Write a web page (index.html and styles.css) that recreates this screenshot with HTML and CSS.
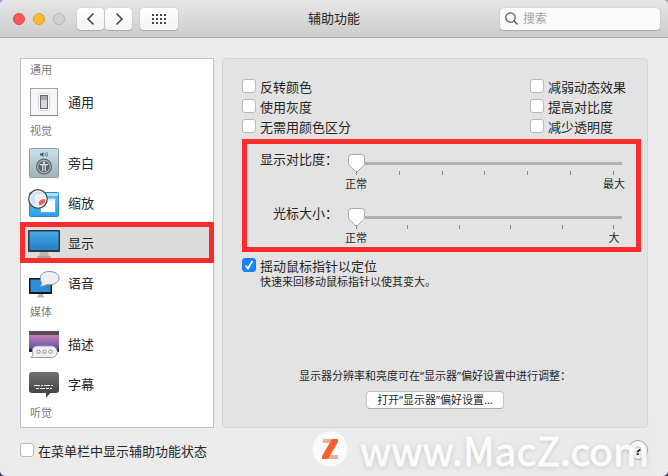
FILE: index.html
```html
<!DOCTYPE html>
<html lang="zh-CN">
<head>
    <meta charset="UTF-8">
    <meta name="viewport" content="width=device-width, initial-scale=1.0">
    <title>辅助功能</title>
    <link rel="stylesheet" href="styles.css">
</head>
<body>
<div class="window">

    <!-- 标题栏 -->
    <header class="titlebar">
        <div class="titlebar-left">
            <div class="lights">
                <button class="light red" aria-label="关闭"></button>
                <button class="light yellow" aria-label="最小化"></button>
                <button class="light off" aria-label="缩放" disabled></button>
            </div>
            <div class="nav">
                <button class="tool-btn" aria-label="后退">
                    <svg width="10" height="14" viewBox="0 0 10 14"><path d="M7.500 1.500 2 7l5.500 5.500" fill="none" stroke="#444" stroke-width="1.600"/></svg>
                </button>
                <button class="tool-btn" aria-label="前进">
                    <svg width="10" height="14" viewBox="0 0 10 14"><path d="M2.500 1.500 8 7l-5.500 5.500" fill="none" stroke="#444" stroke-width="1.600"/></svg>
                </button>
            </div>
            <button class="tool-btn wide" aria-label="显示全部">
                <svg width="14" height="10" viewBox="0 0 14 10" fill="#444">
                    <path d="M0 0h2v2H0zM4 0h2v2H4zM8 0h2v2H8zM12 0h2v2h-2zM0 4h2v2H0zM4 4h2v2H4zM8 4h2v2H8zM12 4h2v2h-2zM0 8h2v2H0zM4 8h2v2H4zM8 8h2v2H8zM12 8h2v2h-2z"/>
                </svg>
            </button>
        </div>
        <h1 class="title">辅助功能</h1>
        <label class="search">
            <svg width="13" height="13" viewBox="0 0 13 13"><circle cx="5.500" cy="5.500" r="4.700" fill="none" stroke="#555" stroke-width="1.200"/><path d="M9 9l3.500 3.500" stroke="#555" stroke-width="1.400"/></svg>
            <input type="text" placeholder="搜索" aria-label="搜索">
        </label>
    </header>

    <main class="content">
        <!-- 左侧列表 -->
        <nav class="sidebar">
            <h2 class="group">通用</h2>
            <a class="item" href="#general">
                <svg width="32" height="32" viewBox="0 0 32 32">
                    <rect x="2.500" y="3.500" width="27" height="27" fill="#f5f6f8" stroke="#a3a5a9"/>
                    <path d="M2 30.500h28" stroke="#85878b"/>
                    <rect x="10.500" y="8.500" width="11" height="17" rx="1" fill="#fff" stroke="#d5d6d8"/>
                    <rect x="12.500" y="10.500" width="7" height="13" fill="#d9dadf" stroke="#66686d"/>
                    <path d="M13 11h6v4h-6z" fill="#a9aaaf"/>
                </svg>
                通用
            </a>
            <h2 class="group">视觉</h2>
            <a class="item" href="#voiceover">
                <svg width="32" height="32" viewBox="0 0 32 32">
                    <defs><linearGradient id="vo" x1="0" y1="0" x2="0" y2="1"><stop offset="0" stop-color="#c9e4ec"/><stop offset="1" stop-color="#a5b0b6"/></linearGradient></defs>
                    <rect x="1.500" y="2.500" width="29" height="29" rx="1.500" fill="url(#vo)" stroke="#8d9da3"/>
                    <path d="M12 7.500h1.500l2-1.500v5l-2-1.500H12z" fill="#4e5b60"/>
                    <path d="M17 7q1 1.500 0 3M18.600 6q1.800 2.500 0 5" fill="none" stroke="#4e5b60" stroke-width=".8"/>
                    <circle cx="16" cy="20.500" r="7.400" fill="#b4c1c5" stroke="#5d696d" stroke-width="1.200"/>
                    <circle cx="16" cy="20.500" r="5.800" fill="#5d676b"/>
                    <circle cx="16" cy="16.700" r="1.200" fill="#dce5e8"/>
                    <path d="M11.800 18.600h8.400M14.800 19v6M17.200 19v6" fill="none" stroke="#dce5e8" stroke-width="1.200"/>
                </svg>
                旁白
            </a>
            <a class="item" href="#zoom">
                <svg width="32" height="32" viewBox="0 0 32 32">
                    <defs><linearGradient id="zm" x1="0" y1="0" x2="0" y2="1"><stop offset="0" stop-color="#5dbcf3"/><stop offset="1" stop-color="#2f9fe8"/></linearGradient></defs>
                    <rect x="1.500" y="6.500" width="29" height="24" rx="1" fill="url(#zm)" stroke="#2a8ccc"/>
                    <path d="M2 7h28v3H2z" fill="#b4ddf0"/>
                    <path d="M12.500 12.500h15v14h-15z" fill="#fff" stroke="#3f9ed8" stroke-width=".7"/>
                    <path d="M12.500 12.500h15v2h-15z" fill="#d5e9f3"/>
                    <circle cx="10" cy="13" r="9.200" fill="#cfe6f2" stroke="#4b4f53" stroke-width="1.500"/>
                    <circle cx="10" cy="13" r="8" fill="none" stroke="#fff" stroke-width=".9"/>
                    <path d="M7 8h9l1 6-6 6-4-1z" fill="#f3eef1"/>
                    <path d="M11 19c-1-4 2-6.500 6.500-5.500 0 3-2.500 6-6.500 5.500z" fill="#ec5f60"/>
                </svg>
                缩放
            </a>
            <a class="item selected" href="#display" aria-current="page">
                <svg width="32" height="32" viewBox="0 0 32 32">
                    <defs><linearGradient id="ds" x1="0" y1="0" x2="0" y2="1"><stop offset="0" stop-color="#4aa9e8"/><stop offset="1" stop-color="#2480c8"/></linearGradient></defs>
                    <path d="M12 26h8l1 4 2 1.500H9L11 30z" fill="#b5b7b9"/>
                    <path d="M9 31h14" stroke="#8c8e90"/>
                    <rect x="0" y="4" width="32" height="22" rx="1" fill="#30363b"/>
                    <rect x="1.500" y="5.500" width="29" height="18.500" fill="url(#ds)"/>
                </svg>
                显示
            </a>
            <a class="item" href="#speech">
                <svg width="32" height="32" viewBox="0 0 32 32">
                    <path d="M10 28h5v2l2 1.500H8l2-1.500z" fill="#b5b7b9"/>
                    <rect x="1" y="12" width="23" height="16" rx=".5" fill="#14181b"/>
                    <rect x="2.500" y="13.500" width="20" height="12.500" fill="#2c8ed5"/>
                    <path d="M11.500 20c2-1 2.500-2 2-3.500C10.500 11 13 5.500 21 5.500c6 0 10 2.500 10 6.500 0 5-6 7.500-12 6.500-2 1.200-5 2-7.500 1.500z" fill="#edf0f5" stroke="#8f949c"/>
                </svg>
                语音
            </a>
            <h2 class="group">媒体</h2>
            <a class="item" href="#descriptions">
                <svg width="32" height="32" viewBox="0 0 32 32">
                    <defs><linearGradient id="md" x1="0" y1="0" x2="0" y2="1"><stop offset="0" stop-color="#e98ba6"/><stop offset=".6" stop-color="#8763b4"/><stop offset="1" stop-color="#4a3c85"/></linearGradient></defs>
                    <rect x="1" y="4" width="30" height="21" fill="url(#md)"/>
                    <path d="M1 4h30v4H1z" fill="#564d50"/>
                    <path d="M1 22h30v3H1z" fill="#211d30"/>
                    <path d="M9.500 19h14a5 5 0 0 1 0 11.500H9.500Q6 30.500 3 30.500q2-1.500 2-3.500C3 22 5.500 19 9.500 19z" fill="#eef0f4" stroke="#969aa2"/>
                    <g fill="#fff" stroke="#858992"><circle cx="10.500" cy="24.700" r="1.700"/><circle cx="16.500" cy="24.700" r="1.700"/><circle cx="22.500" cy="24.700" r="1.700"/></g>
                </svg>
                描述
            </a>
            <a class="item" href="#captions">
                <svg width="32" height="32" viewBox="0 0 32 32">
                    <defs><linearGradient id="cc" x1="0" y1="0" x2="0" y2="1"><stop offset="0" stop-color="#707070"/><stop offset="1" stop-color="#3c3c3c"/></linearGradient></defs>
                    <path d="M4 5h24a3 3 0 0 1 3 3v15a3 3 0 0 1-3 3h-5.500L18 30.500V26H4a3 3 0 0 1-3-3V8a3 3 0 0 1 3-3z" fill="url(#cc)"/>
                    <path d="M6 18.500h20" stroke="#eee" stroke-dasharray="6 1 2 1"/>
                    <path d="M8 21.500h16" stroke="#eee" stroke-dasharray="3 1 5 1"/>
                </svg>
                字幕
            </a>
            <h2 class="group">听觉</h2>
        </nav>

        <!-- 右侧面板 -->
        <section class="panel">
            <div class="options">
                <div class="checks">
                    <div>
                        <label class="check"><input type="checkbox">反转颜色</label>
                        <label class="check"><input type="checkbox">使用灰度</label>
                        <label class="check"><input type="checkbox">无需用颜色区分</label>
                    </div>
                    <div>
                        <label class="check"><input type="checkbox">减弱动态效果</label>
                        <label class="check"><input type="checkbox">提高对比度</label>
                        <label class="check"><input type="checkbox">减少透明度</label>
                    </div>
                </div>

                <div class="sliders">
                    <label for="contrast">显示对比度：</label>
                    <div class="slider">
                        <input type="range" id="contrast" min="0" max="6" value="0">
                        <div class="ticks"><i></i><i></i><i></i><i></i><i></i><i></i><i></i></div>
                        <div class="marks"><span>正常</span><span>最大</span></div>
                    </div>
                    <label for="cursor">光标大小：</label>
                    <div class="slider">
                        <input type="range" id="cursor" min="0" max="5" value="0">
                        <div class="ticks"><i></i><i></i><i></i><i></i><i></i><i></i></div>
                        <div class="marks"><span>正常</span><span>大</span></div>
                    </div>
                </div>

                <label class="check"><input type="checkbox" checked>摇动鼠标指针以定位</label>
                <p class="note">快速来回移动鼠标指针以使其变大。</p>
            </div>

            <div class="more">
                <p>显示器分辨率和亮度可在“显示器”偏好设置中进行调整：</p>
                <button class="push">打开“显示器”偏好设置...</button>
            </div>
        </section>
    </main>

    <footer class="footer">
        <label class="check"><input type="checkbox">在菜单栏中显示辅助功能状态</label>
        <button class="help" aria-label="帮助">?</button>
    </footer>

    <!-- 水印 -->
    <div class="watermark">
        <svg width="36" height="36" viewBox="0 0 36 36">
            <circle cx="18" cy="18" r="17.500" fill="#fff"/>
            <path d="M11 8h15l-3 4H11z" fill="#fb9c7c"/>
            <path d="M12 24h14v4H10z" fill="#fb9c7c"/>
            <path d="M20 8h6v3L16 28h-6v-3z" fill="#fa3c00"/>
        </svg>
        <span>www.MacZ.com</span>
    </div>
</div>
</body>
</html>
```

FILE: styles.css
```css
* { box-sizing: border-box; }

body {
    margin: 0;
    background: linear-gradient(to bottom, #8fa6cc, #2e2f5c);
    color: #262626;
    font-family: "Liberation Sans", "Noto Sans CJK SC", sans-serif;
    font-size: 13px;
}

h1, h2, p { margin: 0; font-weight: normal; }
button, input { font: inherit; }
svg { display: block; flex: none; }

.window {
    position: relative;
    display: flex;
    flex-direction: column;
    min-height: 100vh;
    border-radius: 5px;
    background: #ececec;
    overflow: hidden;
}

/* --- 标题栏 --- */
.titlebar {
    display: grid;
    grid-template-columns: 1fr auto 1fr;
    align-items: center;
    height: 38px;
    padding: 0 8px 0 13px;
    border-bottom: 1px solid #a6a6a6;
    background: linear-gradient(to bottom, #e6e6e6, #cdcdcd);
}
.titlebar-left { display: flex; align-items: center; gap: 8px; }
.lights { display: flex; gap: 8px; margin-right: 4px; }
.light {
    width: 12px;
    height: 12px;
    padding: 0;
    border: 1px solid #bbb;
    border-radius: 50%;
}
.red { background: #fc5753; border-color: #df4744; }
.yellow { background: #fdbc2e; border-color: #de9f28; }
.off { background: #d2d2d2; border-color: #b5b5b5; }
.nav { display: flex; gap: 1px; }
.tool-btn {
    display: flex;
    align-items: center;
    justify-content: center;
    width: 27px;
    height: 22px;
    padding: 0;
    border: 0;
    border-radius: 4px;
    background: linear-gradient(to bottom, #fff, #f3f3f3);
    box-shadow: 0 0 1px 0 #999, 0 1px 1px 0 #aaa;
}
.wide { width: 38px; }
.title { padding-right: 5px; font-size: 13px; line-height: 20px; }
.search {
    display: flex;
    align-items: center;
    gap: 5px;
    justify-self: end;
    width: 160px;
    height: 22px;
    padding: 0 5px;
    border-radius: 4px;
    background: #fbfbfb;
    box-shadow: 0 0 1px 0 #999, 0 1px 1px 0 #aaa;
}
.search input {
    width: 100%;
    padding: 0;
    border: 0;
    outline: 0;
    background: transparent;
    font-size: 12px;
}
.search input::placeholder { color: #a3a3a3; }

/* --- 主体 --- */
.content {
    flex: 1;
    display: grid;
    grid-template-columns: 194px 1fr;
    gap: 8px;
    padding: 20px 20px 0;
}

.sidebar {
    padding: 1px 0 3px;
    border: 1px solid #c0c0c0;
    background: #fff;
}
.group {
    padding-left: 9px;
    color: #7b7b7b;
    font-size: 11px;
    line-height: 21px;
}
.item {
    position: relative;
    display: flex;
    align-items: center;
    gap: 8px;
    height: 40px;
    padding-left: 7px;
    color: inherit;
    text-decoration: none;
}
.selected { background: #dcdcdc; }
/* 红色标注框 */
.selected::after {
    content: "";
    position: absolute;
    inset: 0 -1px -1px;
    border: 5px solid #fa2c2d;
}

.panel {
    display: flex;
    flex-direction: column;
    justify-content: space-between;
    border: 1px solid #d6d6d6;
    border-radius: 4px;
    background: #e3e3e3;
}
.options { padding: 17px 6px 0 19px; }
.checks {
    display: flex;
    justify-content: space-between;
    padding-right: 15px;
}
.check {
    display: flex;
    align-items: center;
    gap: 4px;
    height: 20px;
}
.check input {
    appearance: none;
    width: 14px;
    height: 14px;
    margin: 0;
    border: 1px solid #b9b9b9;
    border-radius: 3px;
    background: #fff;
}
.check input:checked {
    border-color: #1a7df5;
    background: #1a82fb url("data:image/svg+xml,%3Csvg xmlns='http://www.w3.org/2000/svg' viewBox='0 0 12 12'%3E%3Cpath d='M2.500 6.500l2.500 3 4.500-7.500' fill='none' stroke='white' stroke-width='1.700'/%3E%3C/svg%3E") center / 12px no-repeat;
}

/* --- 滑块 --- */
.sliders {
    display: grid;
    grid-template-columns: 91px 1fr;
    gap: 17px 10px;
    margin: 3px 0;
    padding: 10px 14px 2px 0;
    border: 5px solid #fa2c2d;
}
.sliders label { line-height: 12px; text-align: right; }
.slider input {
    appearance: none;
    display: block;
    width: 100%;
    height: 19px;
    margin: 0;
    background: linear-gradient(#b0b0b0, #b0b0b0) center / 100% 3px no-repeat;
}
.slider input::-webkit-slider-thumb {
    appearance: none;
    width: 17px;
    height: 19px;
    background: url("data:image/svg+xml,%3Csvg xmlns='http://www.w3.org/2000/svg' viewBox='0 0 17 19'%3E%3Cpath d='M3.500.5h10q3 0 3 3v6q0 1-.7 1.800l-7.300 7.200-7.300-7.200Q.5 10.500.5 9.500v-6q0-3 3-3z' fill='white' stroke='%23a8a8a8'/%3E%3C/svg%3E") center / 100% no-repeat;
}
.ticks {
    display: flex;
    justify-content: space-between;
    margin: -2px 8px 2px;
}
.ticks i { width: 1px; height: 4px; background: #8a8a8a; }
.marks {
    display: flex;
    justify-content: space-between;
    margin: 0 -3px;
    font-size: 11px;
    line-height: 14px;
}
.marks span { width: 22px; text-align: center; }

.note { padding-left: 18px; font-size: 11px; line-height: 14px; }

.more {
    display: flex;
    flex-direction: column;
    align-items: center;
    gap: 8px;
    padding-bottom: 18px;
    font-family: "Noto Sans", "Noto Sans CJK SC", sans-serif;
    font-size: 11px;
    line-height: 14px;
}
.push {
    height: 18px;
    padding: 0 10px;
    border: 1px solid #c2c2c2;
    border-bottom-color: #a8a8a8;
    border-radius: 4px;
    background: #fff;
    color: inherit;
    line-height: 14px;
}

/* --- 底部 --- */
.footer {
    display: flex;
    align-items: center;
    justify-content: space-between;
    height: 48px;
    padding: 0 20px 4px;
}
.help {
    width: 20px;
    height: 20px;
    padding: 0;
    border: 1px solid #a8a8a8;
    border-radius: 50%;
    background: #f7f7f7;
    color: #000;
    font-weight: bold;
}

.watermark {
    position: absolute;
    right: 19px;
    bottom: 9px;
    display: flex;
    align-items: center;
    gap: 12px;
    color: #fff;
    font-family: "Noto Sans CJK SC", sans-serif;
    font-size: 39px;
    line-height: 36px;
    -webkit-text-stroke: 1px #fff;
    text-shadow: 0 1px 5px rgba(0, 0, 0, 0.25);
    opacity: 0.8;
    pointer-events: none;
}
```
